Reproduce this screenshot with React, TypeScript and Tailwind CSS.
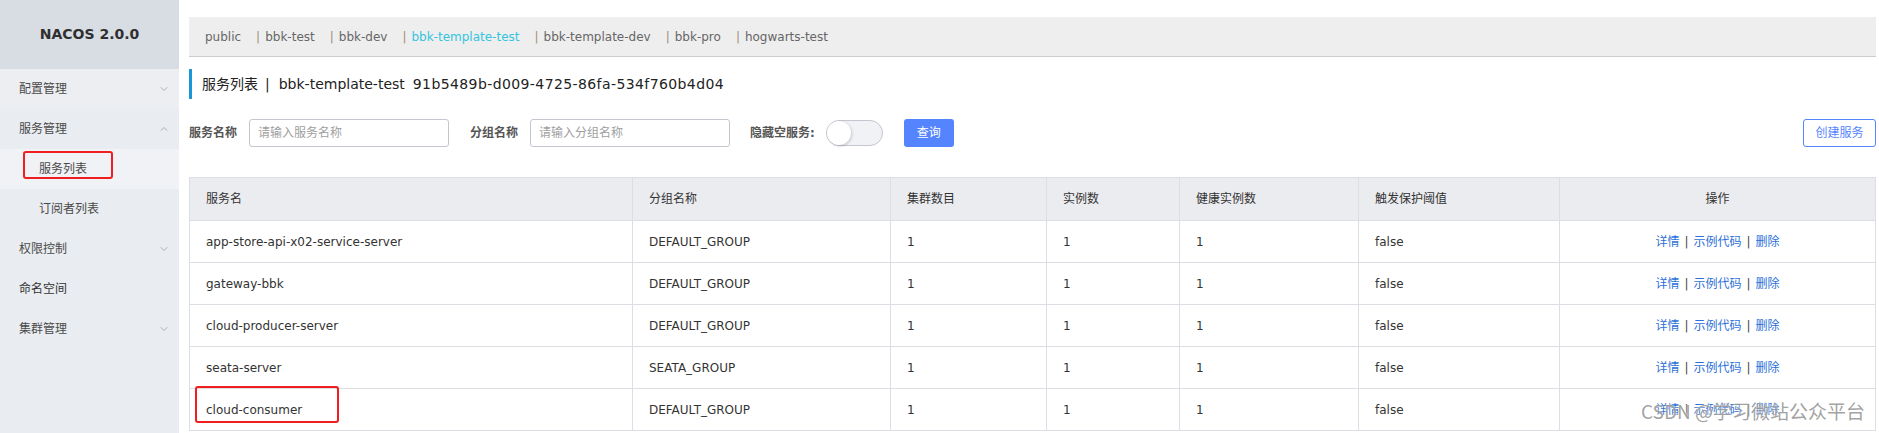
import React from 'react';
import { ChevronDown, ChevronUp } from 'lucide-react';

interface ServiceRow {
    name: string;
    group: string;
    clusters: number;
    instances: number;
    healthy: number;
    threshold: string;
}

const namespaces = ['public', 'bbk-test', 'bbk-dev', 'bbk-template-test', 'bbk-template-dev', 'bbk-pro', 'hogwarts-test'];

const services: ServiceRow[] = [
    { name: 'app-store-api-x02-service-server', group: 'DEFAULT_GROUP', clusters: 1, instances: 1, healthy: 1, threshold: 'false' },
    { name: 'gateway-bbk', group: 'DEFAULT_GROUP', clusters: 1, instances: 1, healthy: 1, threshold: 'false' },
    { name: 'cloud-producer-server', group: 'DEFAULT_GROUP', clusters: 1, instances: 1, healthy: 1, threshold: 'false' },
    { name: 'seata-server', group: 'SEATA_GROUP', clusters: 1, instances: 1, healthy: 1, threshold: 'false' },
    { name: 'cloud-consumer', group: 'DEFAULT_GROUP', clusters: 1, instances: 1, healthy: 1, threshold: 'false' },
];

const columns = [
    { title: '服务名', width: 'w-[443px]' },
    { title: '分组名称', width: 'w-[258px]' },
    { title: '集群数目', width: 'w-[156px]' },
    { title: '实例数', width: 'w-[133px]' },
    { title: '健康实例数', width: 'w-[179px]' },
    { title: '触发保护阈值', width: 'w-[201px]' },
    { title: '操作', width: 'w-[316px]' },
];

const MenuItem = ({ label, open }: { label: string; open?: boolean }) => (
    <div className="h-10 flex items-center justify-between pl-[19px] pr-[9px] text-[12px] text-[#4a4a4a]">
        <span>{label}</span>
        {open === undefined ? null : open ? (
            <ChevronUp size={12} strokeWidth={1.5} className="text-[#9a9a9a]" />
        ) : (
            <ChevronDown size={12} strokeWidth={1.5} className="text-[#9a9a9a]" />
        )}
    </div>
);

const Sidebar = () => (
    <aside className="w-[179px] shrink-0 bg-[#e9ecf0]">
        <div className="h-[69px] bg-[#d8dce3] flex items-center justify-center">
            <span className="text-[14px] font-bold text-[#2f2f2f]">NACOS 2.0.0</span>
        </div>
        <div className="bg-[#eceef2]">
            <MenuItem label="配置管理" open={false} />
        </div>
        <MenuItem label="服务管理" open={true} />
        <div className="relative h-10 flex items-center pl-[39px] bg-[#f1f2f5] text-[12px] text-[#4a4a4a]">
            服务列表
            <div className="absolute left-[23px] top-[2px] w-[90px] h-[28px] border-2 border-[#f01e1e] rounded-[3px]" />
        </div>
        <div className="h-10 flex items-center pl-[39px] text-[12px] text-[#4a4a4a]">订阅者列表</div>
        <MenuItem label="权限控制" open={false} />
        <div className="h-10 flex items-center pl-[19px] text-[12px] text-[#333]">命名空间</div>
        <MenuItem label="集群管理" open={false} />
    </aside>
);

const NamespaceBar = () => (
    <div className="h-10 bg-[#eeeeee] border-b border-[#cccccc] flex items-center pl-[16px] text-[12px] text-[#666]">
        {namespaces.map((ns, i) => (
            <React.Fragment key={ns}>
                {i > 0 && <span className="mr-[5px] text-[#a08f78]">|</span>}
                <span className={i === 3 ? 'mr-[15px] text-[#33c5e0]' : 'mr-[15px]'}>{ns}</span>
            </React.Fragment>
        ))}
    </div>
);

const SearchBar = () => (
    <div className="mt-5 h-7 flex items-center text-[12px]">
        <span className="font-bold text-[#555]">服务名称</span>
        <div className="ml-3 w-[200px] h-7 border border-[#c4c6cf] rounded-[3px] flex items-center px-[8px] text-[#a0a0a0]">
            请输入服务名称
        </div>
        <span className="ml-[21px] font-bold text-[#555]">分组名称</span>
        <div className="ml-3 w-[200px] h-7 border border-[#c4c6cf] rounded-[3px] flex items-center px-[8px] text-[#a0a0a0]">
            请输入分组名称
        </div>
        <span className="ml-5 font-bold text-[#555]">隐藏空服务:</span>
        <div className="ml-[11px] w-[57px] h-[26px] rounded-full border border-[#c4c6cf] bg-[#f1f2f6] flex items-center">
            <div className="w-6 h-6 rounded-full bg-white shadow-[1px_1px_3px_rgba(0,0,0,0.18)]" />
        </div>
        <button className="ml-[21px] w-[50px] h-7 rounded-[3px] bg-[#5584ff] text-white text-[12px]">查询</button>
        <button className="ml-auto w-[73px] h-7 rounded-[3px] border border-[#5584ff] bg-white text-[#5584ff] text-[12px]">
            创建服务
        </button>
    </div>
);

const ServiceTable = () => (
    <table className="mt-[30px] w-[1686px] table-fixed border-collapse text-[12px] text-[#333]">
        <thead>
            <tr className="h-[43px] bg-[#ebecf0]">
                {columns.map((col, i) => (
                    <th
                        key={col.title}
                        className={`${col.width} border border-[#dcdee3] px-4 font-normal ${i === 6 ? 'text-center' : 'text-left'}`}
                    >
                        {col.title}
                    </th>
                ))}
            </tr>
        </thead>
        <tbody>
            {services.map((s, idx) => (
                <tr key={s.name} className="h-[42px]">
                    <td className="relative border border-[#dcdee3] px-4">
                        {s.name}
                        {idx === 4 && (
                            <div className="absolute left-[5px] top-[-3px] w-[144px] h-[37px] border-2 border-[#f01e1e] rounded-[3px]" />
                        )}
                    </td>
                    <td className="border border-[#dcdee3] px-4">{s.group}</td>
                    <td className="border border-[#dcdee3] px-4">{s.clusters}</td>
                    <td className="border border-[#dcdee3] px-4">{s.instances}</td>
                    <td className="border border-[#dcdee3] px-4">{s.healthy}</td>
                    <td className="border border-[#dcdee3] px-4">{s.threshold}</td>
                    <td className="border border-[#dcdee3] px-4 text-center">
                        <span className="text-[#2b6fd8]">详情</span>
                        <span className="mx-[5px] text-[#444]">|</span>
                        <span className="text-[#2b6fd8]">示例代码</span>
                        <span className="mx-[5px] text-[#444]">|</span>
                        <span className="text-[#2b6fd8]">删除</span>
                    </td>
                </tr>
            ))}
        </tbody>
    </table>
);

export default function App() {
    return (
        <div className="relative flex min-h-screen bg-white font-['DejaVu_Sans','Noto_Sans_CJK_SC',sans-serif]">
            <Sidebar />
            <main className="flex-1 pl-[10px] pr-[4px] pt-[17px]">
                <NamespaceBar />
                <div className="mt-3 h-[30px] flex items-center border-l-[3px] border-[#1a96d4] pl-[10px] text-[14px] text-[#222]">
                    <span>服务列表</span>
                    <span className="ml-[7px] mr-[9px]">|</span>
                    <span>bbk-template-test</span>
                    <span className="ml-2 tracking-[0.4px]">91b5489b-d009-4725-86fa-534f760b4d04</span>
                </div>
                <SearchBar />
                <ServiceTable />
            </main>
            <div className="absolute right-[14px] bottom-[8px] text-[19px] text-[#8a8a8a]/80 font-['Noto_Sans_CJK_SC',sans-serif] [text-shadow:0_0_2px_#fff]">
                CSDN @学习微站公众平台
            </div>
        </div>
    );
}
